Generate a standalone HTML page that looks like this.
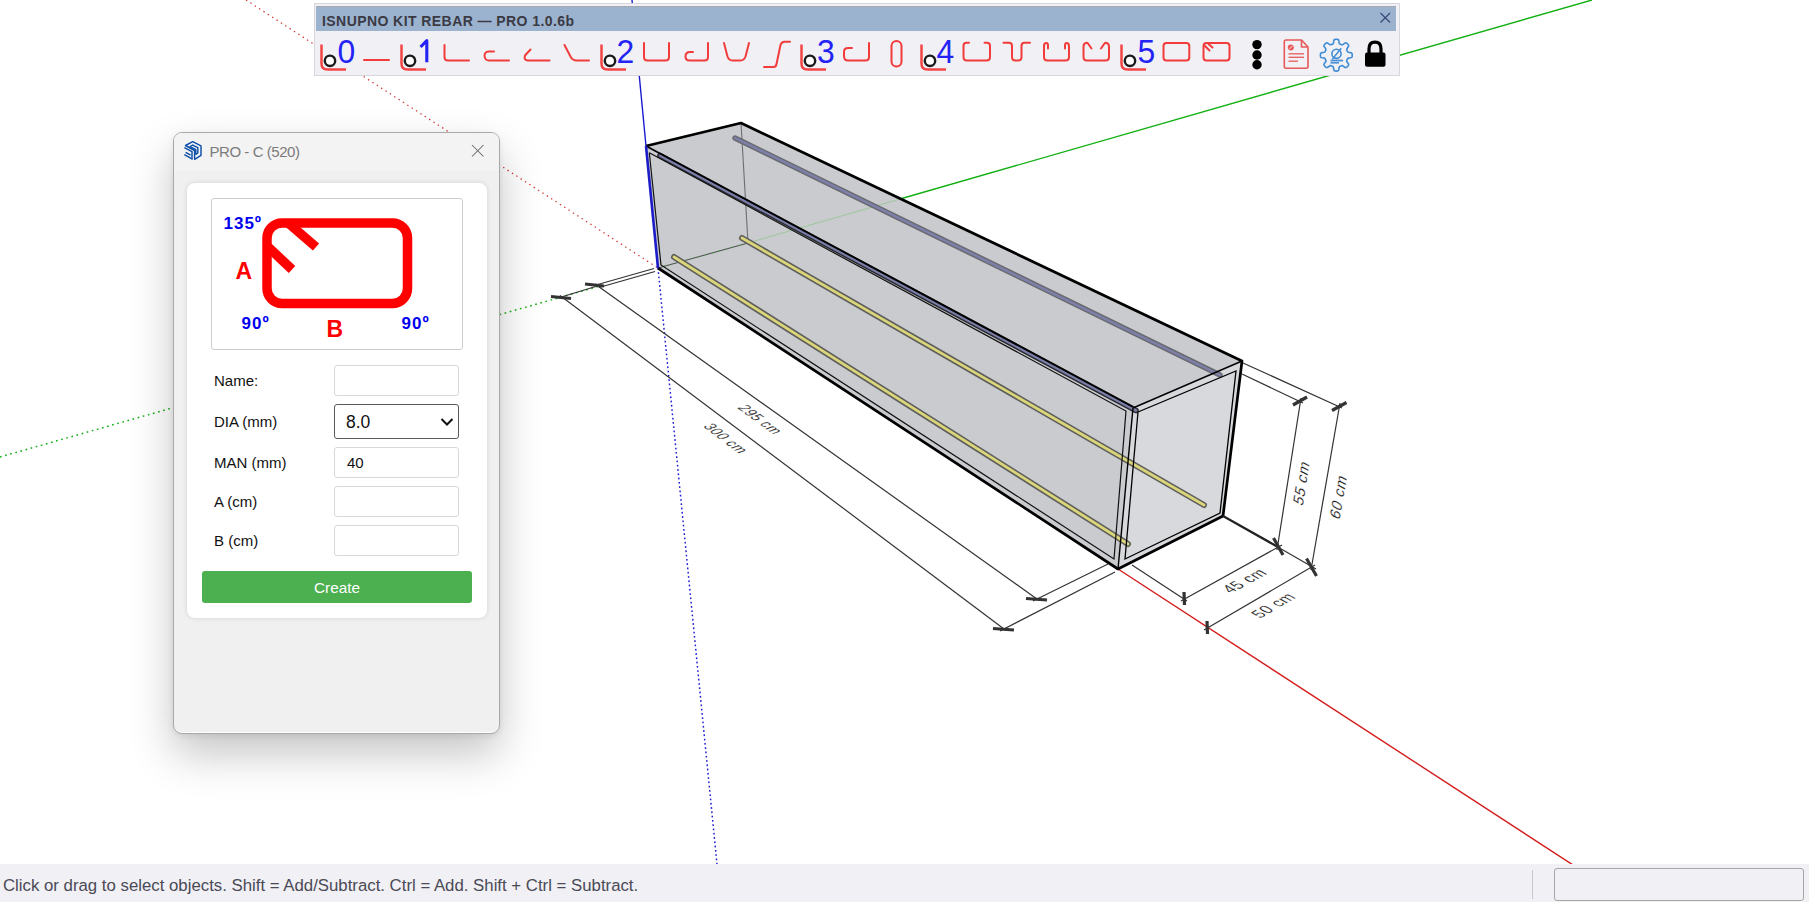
<!DOCTYPE html>
<html><head><meta charset="utf-8">
<style>
html,body{margin:0;padding:0;width:1809px;height:902px;overflow:hidden;background:#fff;font-family:"Liberation Sans",sans-serif;}
.abs{position:absolute;}
#scene{position:absolute;left:0;top:0;}
#status{position:absolute;left:0;top:864px;width:1809px;height:38px;background:#f0f0f5;}
#status .msg{position:absolute;left:3px;top:12px;font-size:16.8px;color:#4a4a55;white-space:nowrap;letter-spacing:0;}
#status .sep{position:absolute;left:1532px;top:6px;width:1px;height:29px;background:#c8c8cc;}
#status .box{position:absolute;left:1554px;top:4px;width:248px;height:31px;border:1px solid #a6a6a6;border-radius:3px;background:#f0f0f5;}
</style></head>
<body>
<svg id="scene" width="1809" height="902" viewBox="0 0 1809 902">
<!-- axes behind -->
<line x1="246" y1="0" x2="658" y2="268" stroke="#d43030" stroke-width="1.25" stroke-dasharray="1.4 3.8"/>
<line x1="0" y1="457" x2="600" y2="286" stroke="#18b018" stroke-width="1.5" stroke-dasharray="1.7 3.6"/>
<line x1="658" y1="268" x2="717" y2="864" stroke="#1a1ad8" stroke-width="1.45" stroke-dasharray="1.7 2.6"/>
<line x1="1118" y1="569" x2="1630" y2="902" stroke="#d41c1c" stroke-width="1.4"/>
<line x1="900" y1="199" x2="1592" y2="0" stroke="#12b012" stroke-width="1.4"/>
<line x1="632" y1="0" x2="646" y2="146" stroke="#1a1ad0" stroke-width="1.4"/>
<!-- box silhouette fill -->
<polygon points="646,146 741,123 1242,361 1223,516 1118,569 658,268" fill="#c9cbce"/>
<!-- far end face -->
<polygon points="1133,408 1242,361 1223,516 1118,569" fill="#d8d9dc"/>
<!-- through-lines inside -->
<line x1="658" y1="268" x2="748" y2="243" stroke="#505850" stroke-width="1.1"/>
<line x1="658" y1="268" x2="748" y2="243" stroke="#30c030" stroke-width="1.1" stroke-dasharray="1 6" opacity="0.6"/>
<line x1="748" y1="243" x2="900" y2="199" stroke="#9cc89c" stroke-width="1"/>
<line x1="741" y1="123" x2="748" y2="243" stroke="#6e6e6e" stroke-width="1.1"/>
<!-- rebars -->
<g stroke-linecap="round">
<line x1="735" y1="138" x2="1220" y2="375" stroke="#6a6a70" stroke-width="5.4"/>
<line x1="735" y1="138" x2="1220" y2="375" stroke="#7d80aa" stroke-width="2.4"/>
<line x1="742" y1="238" x2="1204" y2="505" stroke="#5e5e5c" stroke-width="6"/>
<line x1="742" y1="238" x2="1204" y2="505" stroke="#dcd67a" stroke-width="2.8"/>
<line x1="674" y1="257" x2="1128" y2="544" stroke="#5e5e5c" stroke-width="6"/>
<line x1="674" y1="257" x2="1128" y2="544" stroke="#dcd67a" stroke-width="2.8"/>
<line x1="660" y1="155.5" x2="1136" y2="410.5" stroke="#2a2a30" stroke-width="5.6"/>
<line x1="660" y1="155.5" x2="1136" y2="410.5" stroke="#7a7ea8" stroke-width="2.6"/>
</g>
<!-- inner lines front face -->
<polyline points="649.3,152.8 1126,411 1114,559 661,265 649.3,152.8" fill="none" stroke="#111" stroke-width="1.2"/>
<line x1="646" y1="146" x2="1133" y2="407" stroke="#000" stroke-width="1.8"/>
<!-- far face lines -->
<polyline points="1133,408 1118,569" fill="none" stroke="#000" stroke-width="1.4"/>
<polyline points="1138,412 1236,371 1220,513 1125,559 1138,412" fill="none" stroke="#000" stroke-width="1.3"/>
<line x1="1133" y1="408" x2="1242" y2="361" stroke="#000" stroke-width="1.4"/>
<!-- silhouette thick -->
<polyline points="646,146 741,123 1242,361 1223,516 1118,569 658,268" fill="none" stroke="#000" stroke-width="2.7" stroke-linejoin="round"/>
<line x1="646" y1="146" x2="658" y2="268" stroke="#1c1cc8" stroke-width="2.6"/>
<!-- dimension lines -->
<g stroke="#333" stroke-width="1.2" fill="none">
<line x1="654" y1="268.5" x2="596" y2="285"/>
<line x1="655" y1="271.5" x2="599" y2="287.5"/>
<line x1="599" y1="285.5" x2="558" y2="298"/>
<line x1="560" y1="295.5" x2="1006" y2="630.5"/>
<line x1="595" y1="284" x2="1039" y2="600.5"/>
<line x1="1033" y1="601" x2="1108" y2="564"/>
<line x1="1000" y1="631" x2="1115" y2="572"/>
<line x1="1243" y1="363" x2="1342" y2="408"/>
<line x1="1242" y1="374" x2="1303" y2="403"/>
<line x1="1301" y1="398" x2="1277" y2="550"/>
<line x1="1340" y1="403" x2="1311" y2="570"/>
<line x1="1276" y1="546" x2="1316" y2="569"/>
<line x1="1132" y1="565" x2="1187" y2="601"/>
<line x1="1181" y1="601" x2="1282" y2="545"/>
<line x1="1204" y1="630" x2="1315" y2="565"/>
</g>
<line x1="1223" y1="516" x2="1278" y2="547" stroke="#222" stroke-width="2.2"/>
<!-- ticks -->
<g stroke="#333" stroke-width="3.2" stroke-linecap="butt">
<line x1="551" y1="296.5" x2="571" y2="298.5"/>
<line x1="585" y1="284" x2="604" y2="286"/>
<line x1="993" y1="628.5" x2="1014" y2="630"/>
<line x1="1026" y1="598.5" x2="1047" y2="600"/>
<line x1="1293" y1="405" x2="1307" y2="397"/>
<line x1="1332" y1="410.5" x2="1346.5" y2="402.5"/>
<line x1="1273.5" y1="538" x2="1283" y2="555"/>
<line x1="1306.5" y1="558.5" x2="1316.5" y2="576"/>
<line x1="1184" y1="592" x2="1184.5" y2="605"/>
<line x1="1207" y1="621" x2="1207.5" y2="634"/>
</g>
<!-- dim texts -->
<g font-family="Liberation Sans" font-size="13.5" fill="#1a1a1a" stroke="#fff" stroke-width="0.15" text-anchor="middle" letter-spacing="0.6">
<text transform="translate(760.5,419.5) rotate(36) skewX(-34)" dy="4.5" font-size="13">295 cm</text>
<text transform="translate(726,438.5) rotate(37) skewX(-34)" dy="4.5" font-size="13">300 cm</text>
<text transform="translate(1302,483) rotate(-81) skewX(-18)" dy="4.5" font-size="15">55 cm</text>
<text transform="translate(1339,497) rotate(-80.5) skewX(-18)" dy="4.5" font-size="15">60 cm</text>
<text transform="translate(1245,581) rotate(-28.7) skewX(32)" dy="4.5" font-size="14.5">45 cm</text>
<text transform="translate(1274,605.5) rotate(-30.2) skewX(32)" dy="4.5" font-size="14.5">50 cm</text>
</g>
</svg>
<div id="tb" style="position:absolute;left:314px;top:3px;width:1084px;height:71px;background:#f0f0f5;border:1px solid #d6d6de;"></div>
<div style="position:absolute;left:316px;top:6px;width:1080px;height:25px;background:#9cb3cf;border-top:1px solid #a8a8b0;box-sizing:border-box;"></div>
<div style="position:absolute;left:322px;top:12.5px;font-size:14px;font-weight:bold;color:#3a3a44;white-space:nowrap;letter-spacing:0.43px;">ISNUPNO KIT REBAR — PRO 1.0.6b</div>
<svg style="position:absolute;left:0;top:0;" width="1809" height="80" viewBox="0 0 1809 80">
<g stroke="#3c4a78" stroke-width="1.3"><line x1="1380.5" y1="13" x2="1390" y2="22.5"/><line x1="1390" y1="13" x2="1380.5" y2="22.5"/></g>
<defs>
<g id="lic">
 <path d="M-14.5,44.5 V63.5 Q-14.5,69.5 -8.5,69.5 H10" fill="none" stroke="#f24646" stroke-width="2.5"/>
 <circle cx="-6" cy="60.8" r="5.2" fill="#fff" stroke="#1a1a1a" stroke-width="2.4"/>
</g>
</defs>
<g fill="none" stroke="#f23c3c" stroke-width="2.0" stroke-linecap="round" stroke-linejoin="round">
<!-- dash -->
<line x1="364" y1="60" x2="389" y2="60"/>
<!-- L -->
<path d="M444.5,45 V57 Q444.5,60.5 448,60.5 H469"/>
<!-- hook -->
<path d="M494,51.5 H488.5 Q484.5,52 484.5,56 Q485,60.5 489,60.5 H509"/>
<!-- angled hook -->
<path d="M530.5,49.5 L525,55.5 Q523.5,60.5 528,60.5 H549.5"/>
<!-- \_ -->
<path d="M564.5,45 L571,57.5 Q573,60.5 576.5,60.5 H589"/>
<!-- U -->
<path d="M644,43 V57 Q644,60.5 647.5,60.5 H665.5 Q669,60.5 669,57 V43"/>
<!-- J -->
<path d="M708,43 V57 Q708,60.5 704.5,60.5 H689.5 Q685.5,60.5 685.5,56.5 Q685.5,52 690,52 H693"/>
<!-- V U -->
<path d="M724,43 L727.5,56.5 Q729,60.5 732.5,60.5 H740.5 Q744,60.5 745.5,56.5 L749,43"/>
<!-- S -->
<path d="M764,67 H773.5 Q776,67 776.5,64 L780.5,45 Q781.5,41.8 784.5,41.8 H790"/>
<!-- J2 -->
<path d="M869,43 V57 Q869,60.5 865.5,60.5 H848 Q844,60.5 844,56 V52 Q844,48 848,48 H852"/>
<!-- capsule -->
<rect x="891.5" y="41" width="10" height="25.5" rx="5"/>
<!-- open rect inward hooks -->
<path d="M969,42.8 H966.5 Q963.5,42.8 963.5,46 V57 Q963.5,60.5 967,60.5 H986.5 Q990,60.5 990,57 V46 Q990,42.8 987,42.8 H984.5"/>
<!-- U flanges -->
<path d="M1003.5,42.8 H1009 Q1012,42.8 1012,46 V57 Q1012,60.5 1015.5,60.5 H1018 Q1021.5,60.5 1021.5,57 V46 Q1021.5,42.8 1024.5,42.8 H1030"/>
<!-- curled -->
<path d="M1048,48.5 V45.5 Q1048,43 1046.5,43 Q1044,43 1044,46 V57 Q1044,60.5 1047.5,60.5 H1065.5 Q1069,60.5 1069,57 V46 Q1069,43 1066.5,43 Q1065,43 1065,45.5 V48.5"/>
<!-- angled curled -->
<path d="M1091.5,48.5 L1088,43.5 Q1087,42.5 1086,43 Q1083.5,43.5 1083.5,46.5 V57 Q1083.5,60.5 1087,60.5 H1105.5 Q1109,60.5 1109,57 V46.5 Q1109,43.5 1106.5,43 Q1105.5,42.5 1104.5,43.5 L1101,48.5"/>
<!-- rect -->
<rect x="1163.5" y="43" width="25.8" height="17.5" rx="3"/>
<!-- rect hook -->
<rect x="1203.5" y="43" width="26" height="17.5" rx="3"/>
<line x1="1204.5" y1="45.5" x2="1209.5" y2="50.5"/>
<line x1="1208" y1="43.5" x2="1212.5" y2="47.5"/>
</g>
<!-- L icons -->
<use href="#lic" x="336"/><use href="#lic" x="416"/><use href="#lic" x="616"/><use href="#lic" x="816"/><use href="#lic" x="936"/><use href="#lic" x="1136"/>
<g fill="#2323f5" font-family="Liberation Sans" font-size="32.5">
<text transform="translate(337.6,62.5) scale(0.98,1)">0</text>

<text transform="translate(616.5,62.5) scale(0.98,1)">2</text>
<text transform="translate(817,62.5) scale(0.98,1)">3</text>
<text transform="translate(936.5,62.5) scale(0.98,1)">4</text>
<text transform="translate(1137.5,62.5) scale(0.98,1)">5</text>
</g>
<path d="M426.8,62.3 V40.5 L420.6,47" fill="none" stroke="#2323f5" stroke-width="3.1" stroke-linejoin="round"/>
<!-- dots -->
<g fill="#000"><circle cx="1257" cy="44.6" r="4.7"/><circle cx="1257" cy="55" r="4.7"/><circle cx="1257" cy="64.8" r="4.7"/></g>
<!-- doc -->
<g fill="none" stroke="#e85a5a" stroke-width="1.6" stroke-linejoin="round">
<path d="M1286,40 H1301.5 L1308,47 V66.5 Q1308,68.2 1306.3,68.2 H1286 Q1284.3,68.2 1284.3,66.5 V41.7 Q1284.3,40 1286,40 Z"/>
<path d="M1301.5,40 V47 H1308"/>
<line x1="1288.5" y1="53.8" x2="1304" y2="53.8" stroke-width="1.3"/>
<line x1="1288.5" y1="57.3" x2="1304" y2="57.3" stroke-width="1.3"/>
<line x1="1288.5" y1="61.2" x2="1298" y2="61.2" stroke-width="1.3"/>
</g>
<circle cx="1290.8" cy="47.5" r="3" fill="#e85a5a"/>
<line x1="1289" y1="49.3" x2="1292.6" y2="45.7" stroke="#fff" stroke-width="0.8"/>
<!-- gear -->
<g fill="none" stroke="#3f8bd4" stroke-width="1.6" stroke-linejoin="round">
<path d="M1336.30,39.30 L1336.72,39.31 L1337.13,39.34 L1337.54,39.40 L1337.95,39.52 L1338.33,39.75 L1338.67,40.24 L1338.91,41.12 L1339.06,42.21 L1339.21,43.09 L1339.41,43.59 L1339.66,43.86 L1339.93,44.02 L1340.21,44.15 L1340.49,44.27 L1340.78,44.39 L1341.06,44.51 L1341.34,44.62 L1341.63,44.73 L1341.95,44.80 L1342.31,44.79 L1342.81,44.58 L1343.53,44.07 L1344.41,43.39 L1345.20,42.95 L1345.78,42.84 L1346.22,42.94 L1346.59,43.15 L1346.93,43.40 L1347.24,43.67 L1347.54,43.96 L1347.83,44.26 L1348.10,44.57 L1348.35,44.91 L1348.56,45.28 L1348.66,45.72 L1348.55,46.30 L1348.11,47.09 L1347.43,47.97 L1346.92,48.69 L1346.71,49.19 L1346.70,49.55 L1346.77,49.87 L1346.88,50.16 L1346.99,50.44 L1347.11,50.72 L1347.23,51.01 L1347.35,51.29 L1347.48,51.57 L1347.64,51.84 L1347.91,52.09 L1348.41,52.29 L1349.29,52.44 L1350.38,52.59 L1351.26,52.83 L1351.75,53.17 L1351.98,53.55 L1352.10,53.96 L1352.16,54.37 L1352.19,54.78 L1352.20,55.20 L1352.19,55.62 L1352.16,56.03 L1352.10,56.44 L1351.98,56.85 L1351.75,57.23 L1351.26,57.57 L1350.38,57.81 L1349.29,57.96 L1348.41,58.11 L1347.91,58.31 L1347.64,58.56 L1347.48,58.83 L1347.35,59.11 L1347.23,59.39 L1347.11,59.68 L1346.99,59.96 L1346.88,60.24 L1346.77,60.53 L1346.70,60.85 L1346.71,61.21 L1346.92,61.71 L1347.43,62.43 L1348.11,63.31 L1348.55,64.10 L1348.66,64.68 L1348.56,65.12 L1348.35,65.49 L1348.10,65.83 L1347.83,66.14 L1347.54,66.44 L1347.24,66.73 L1346.93,67.00 L1346.59,67.25 L1346.22,67.46 L1345.78,67.56 L1345.20,67.45 L1344.41,67.01 L1343.53,66.33 L1342.81,65.82 L1342.31,65.61 L1341.95,65.60 L1341.63,65.67 L1341.34,65.78 L1341.06,65.89 L1340.78,66.01 L1340.49,66.13 L1340.21,66.25 L1339.93,66.38 L1339.66,66.54 L1339.41,66.81 L1339.21,67.31 L1339.06,68.19 L1338.91,69.28 L1338.67,70.16 L1338.33,70.65 L1337.95,70.88 L1337.54,71.00 L1337.13,71.06 L1336.72,71.09 L1336.30,71.10 L1335.88,71.09 L1335.47,71.06 L1335.06,71.00 L1334.65,70.88 L1334.27,70.65 L1333.93,70.16 L1333.69,69.28 L1333.54,68.19 L1333.39,67.31 L1333.19,66.81 L1332.94,66.54 L1332.67,66.38 L1332.39,66.25 L1332.11,66.13 L1331.82,66.01 L1331.54,65.89 L1331.26,65.78 L1330.97,65.67 L1330.65,65.60 L1330.29,65.61 L1329.79,65.82 L1329.07,66.33 L1328.19,67.01 L1327.40,67.45 L1326.82,67.56 L1326.38,67.46 L1326.01,67.25 L1325.67,67.00 L1325.36,66.73 L1325.06,66.44 L1324.77,66.14 L1324.50,65.83 L1324.25,65.49 L1324.04,65.12 L1323.94,64.68 L1324.05,64.10 L1324.49,63.31 L1325.17,62.43 L1325.68,61.71 L1325.89,61.21 L1325.90,60.85 L1325.83,60.53 L1325.72,60.24 L1325.61,59.96 L1325.49,59.68 L1325.37,59.39 L1325.25,59.11 L1325.12,58.83 L1324.96,58.56 L1324.69,58.31 L1324.19,58.11 L1323.31,57.96 L1322.22,57.81 L1321.34,57.57 L1320.85,57.23 L1320.62,56.85 L1320.50,56.44 L1320.44,56.03 L1320.41,55.62 L1320.40,55.20 L1320.41,54.78 L1320.44,54.37 L1320.50,53.96 L1320.62,53.55 L1320.85,53.17 L1321.34,52.83 L1322.22,52.59 L1323.31,52.44 L1324.19,52.29 L1324.69,52.09 L1324.96,51.84 L1325.12,51.57 L1325.25,51.29 L1325.37,51.01 L1325.49,50.72 L1325.61,50.44 L1325.72,50.16 L1325.83,49.87 L1325.90,49.55 L1325.89,49.19 L1325.68,48.69 L1325.17,47.97 L1324.49,47.09 L1324.05,46.30 L1323.94,45.72 L1324.04,45.28 L1324.25,44.91 L1324.50,44.57 L1324.77,44.26 L1325.06,43.96 L1325.36,43.67 L1325.67,43.40 L1326.01,43.15 L1326.38,42.94 L1326.82,42.84 L1327.40,42.95 L1328.19,43.39 L1329.07,44.07 L1329.79,44.58 L1330.29,44.79 L1330.65,44.80 L1330.97,44.73 L1331.26,44.62 L1331.54,44.51 L1331.82,44.39 L1332.11,44.27 L1332.39,44.15 L1332.67,44.02 L1332.94,43.86 L1333.19,43.59 L1333.39,43.09 L1333.54,42.21 L1333.69,41.12 L1333.93,40.24 L1334.27,39.75 L1334.65,39.52 L1335.06,39.40 L1335.47,39.34 L1335.88,39.31Z"/>
<circle cx="1336.5" cy="53.8" r="4.6"/>
<line x1="1332.3" y1="59.3" x2="1341.2" y2="48.2" stroke-width="1.4"/>
</g>
<g fill="#4a90d4"><rect x="1330.5" y="59.6" width="12.5" height="1.8"/><rect x="1330.5" y="62" width="8.5" height="1.6"/></g>
<!-- lock -->
<path d="M1369,53 V49 Q1369,42.2 1375,42.2 Q1381,42.2 1381,49 V53" fill="none" stroke="#000" stroke-width="3.2"/>
<rect x="1365" y="52.5" width="20.5" height="14.2" rx="2" fill="#000"/>
</svg>

<div id="dlg" style="position:absolute;left:173px;top:132px;width:325px;height:600px;background:#f0f0f0;border:1px solid #a8a8a8;border-radius:9px;box-shadow:0 20px 44px rgba(0,0,0,0.23),0 2px 6px rgba(0,0,0,0.08),inset 0 -1px 0 #fff;">
 <div style="position:absolute;left:0;top:0;width:325px;height:38px;background:#f3f3f3;border-radius:8px 8px 0 0;"></div>
 <svg style="position:absolute;left:10px;top:7px;" width="20" height="22" viewBox="184 140 20 22">
  <g fill="none" stroke="#0d4ea8" stroke-width="1.45" stroke-linejoin="round" transform="translate(0,0)">
   <path d="M194.6,159.3 L201,155.3 V145.8 L192.7,141.7 L185.5,145.5 L194.6,150.5 Z"/>
   <path d="M195.8,154.3 L197.8,153 V147.6 L192.7,145.1 L190.1,146.6 L195.8,149.6 Z"/>
   <path d="M184.3,147.6 L192,151.6 V159.8"/>
   <path d="M185.6,152.3 L190.6,155.1"/>
   <path d="M184.3,154.6 L191.5,158.6"/>
  </g>
 </svg>
 <div style="position:absolute;left:35.5px;top:9.5px;font-size:15px;letter-spacing:-0.45px;color:#7b7b7b;white-space:nowrap;">PRO - C (520)</div>
 <svg style="position:absolute;left:297px;top:11px;" width="14" height="14" viewBox="0 0 14 14"><g stroke="#6a6a6a" stroke-width="1.05"><line x1="1" y1="1" x2="12.5" y2="12.5"/><line x1="12.5" y1="1" x2="1" y2="12.5"/></g></svg>
 <div id="card" style="position:absolute;left:13px;top:50px;width:300px;height:435px;background:#fff;border-radius:8px;box-shadow:0 0 5px rgba(0,0,0,0.12);">
  <div style="position:absolute;left:24px;top:15px;width:252px;height:152px;border:1px solid #cdcdcd;border-radius:3px;box-sizing:border-box;">
   <svg style="position:absolute;left:-1px;top:-1px;" width="252" height="152" viewBox="211 198 252 152">
    <path d="M287,222 L316,247" stroke="#ff0000" stroke-width="9.5" stroke-linecap="butt" fill="none"/>
    <path d="M266,245 L292,269.5" stroke="#ff0000" stroke-width="9.5" stroke-linecap="butt" fill="none"/>
    <rect x="267" y="223" width="140.5" height="80.5" rx="15" fill="none" stroke="#ff0000" stroke-width="9.5"/>
    <g font-family="Liberation Sans" font-weight="bold" fill="#0000ee" font-size="17" letter-spacing="1">
     <text x="223.5" y="228.8">135º</text>
     <text x="241.5" y="329">90º</text>
     <text x="401.5" y="329">90º</text>
    </g>
    <g font-family="Liberation Sans" font-weight="bold" fill="#ff0000" font-size="23">
     <text x="235.5" y="278.5">A</text>
     <text x="326.5" y="337">B</text>
    </g>
   </svg>
  </div>
 </div>
</div>
<div style="position:absolute;left:0;top:0;font-size:15px;color:#111;">
 <div style="position:absolute;left:214px;top:372px;white-space:nowrap;">Name:</div>
 <div style="position:absolute;left:214px;top:413px;white-space:nowrap;">DIA (mm)</div>
 <div style="position:absolute;left:214px;top:454px;white-space:nowrap;">MAN (mm)</div>
 <div style="position:absolute;left:214px;top:493px;white-space:nowrap;">A (cm)</div>
 <div style="position:absolute;left:214px;top:532px;white-space:nowrap;">B (cm)</div>
 <div style="position:absolute;left:334px;top:365px;width:125px;height:31px;box-sizing:border-box;border:1px solid #d8d8d8;border-radius:3px;"></div>
 <div style="position:absolute;left:334px;top:404px;width:125px;height:35px;box-sizing:border-box;border:1px solid #5a5a5a;border-radius:3px;"></div>
 <div style="position:absolute;left:346px;top:412px;white-space:nowrap;font-size:17.5px;">8.0</div>
 <svg style="position:absolute;left:440px;top:416px;" width="14" height="12" viewBox="0 0 14 12"><path d="M1.5,3 L7,8.5 L12.5,3" fill="none" stroke="#111" stroke-width="2"/></svg>
 <div style="position:absolute;left:334px;top:447px;width:125px;height:31px;box-sizing:border-box;border:1px solid #d8d8d8;border-radius:3px;"></div>
 <div style="position:absolute;left:347px;top:454px;white-space:nowrap;">40</div>
 <div style="position:absolute;left:334px;top:486px;width:125px;height:31px;box-sizing:border-box;border:1px solid #d8d8d8;border-radius:3px;"></div>
 <div style="position:absolute;left:334px;top:525px;width:125px;height:31px;box-sizing:border-box;border:1px solid #d8d8d8;border-radius:3px;"></div>
 <div style="position:absolute;left:202px;top:571px;width:270px;height:31.5px;background:#4caf50;border-radius:3px;color:#fff;text-align:center;line-height:33px;font-size:15.3px;">Create</div>
</div>

<div id="status"><div class="msg">Click or drag to select objects. Shift = Add/Subtract. Ctrl = Add. Shift + Ctrl = Subtract.</div><div class="sep"></div><div class="box"></div></div>
</body></html>
